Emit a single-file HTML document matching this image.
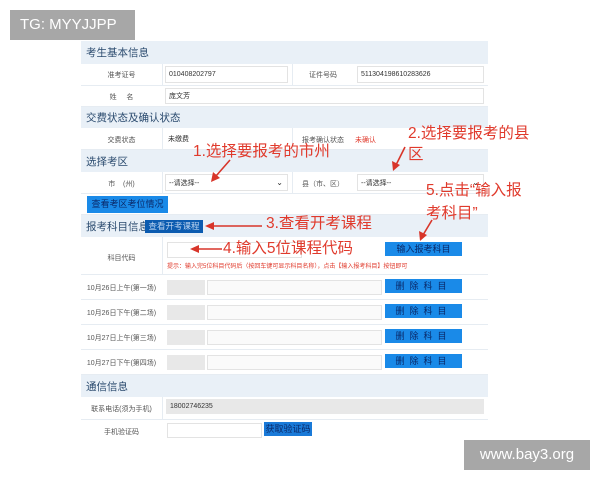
<!DOCTYPE html>
<html><head><meta charset="utf-8"><style>
*{margin:0;padding:0;box-sizing:border-box}
body{width:600px;height:480px;background:#fff;position:relative;overflow:hidden;font-family:"Liberation Sans","Noto Sans CJK SC",sans-serif}
.a{position:absolute}
.hd{position:absolute;left:81px;width:407px;background:#e9f0f7;color:#2a4a6e;font-size:10.5px;padding-left:5px;display:flex;align-items:center}
.row{position:absolute;left:81px;width:407px;background:#fff;border-bottom:1px solid #e6ecf2}
.lab{position:absolute;font-size:7px;color:#555;text-align:center}
.inp{position:absolute;border:1px solid #e3e3e3;background:#fff;font-size:7px;color:#333;padding-left:3px;display:flex;align-items:center}
.g{background:#e8e8e8;border-color:#e8e8e8}
.btn{position:absolute;background:#1a8ae8;color:#0a2a6a;font-size:9px;text-align:center;letter-spacing:0}
.red{position:absolute;color:#e03a2c;font-size:15.5px;white-space:nowrap;line-height:1}
.vl{position:absolute;width:1px;background:#e6ecf2}
</style></head><body>
<div class="a" style="left:10px;top:10px;width:125px;height:30px;background:#a7a7a7;color:#fff;font-size:15px;line-height:30px;padding-left:10px">TG: MYYJJPP</div>
<div class="a" style="left:81px;top:41px;width:407px;height:400px;background:#f4f7fa"></div>

<div class="hd" style="top:41px;height:23px">考生基本信息</div>
<div class="row" style="top:64px;height:22px"></div>
<div class="vl" style="left:162px;top:64px;height:43px"></div>
<div class="lab" style="left:81px;top:70px;width:81px">准考证号</div>
<div class="inp" style="left:165px;top:66px;width:123px;height:17px">010408202797</div>
<div class="vl" style="left:292px;top:64px;height:22px"></div>
<div class="lab" style="left:292px;top:70px;width:62px">证件号码</div>
<div class="inp" style="left:357px;top:66px;width:127px;height:17px">511304198610283626</div>
<div class="row" style="top:86px;height:21px"></div>
<div class="lab" style="left:81px;top:92px;width:81px">姓&nbsp;&nbsp;&nbsp;&nbsp;&nbsp;名</div>
<div class="inp" style="left:165px;top:88px;width:319px;height:16px">庞文芳</div>

<div class="hd" style="top:107px;height:21px">交费状态及确认状态</div>
<div class="row" style="top:128px;height:22px"></div>
<div class="vl" style="left:162px;top:128px;height:22px"></div>
<div class="lab" style="left:81px;top:135px;width:81px">交费状态</div>
<div class="inp" style="left:165px;top:131px;width:28px;height:16px;border:none">未缴费</div>
<div class="vl" style="left:292px;top:128px;height:22px"></div>
<div class="lab" style="left:292px;top:135px;width:62px">报考确认状态</div>
<div class="lab" style="left:355px;top:135px;color:#e03a2c">未确认</div>

<div class="hd" style="top:150px;height:22px">选择考区</div>
<div class="row" style="top:172px;height:22px"></div>
<div class="vl" style="left:162px;top:172px;height:22px"></div>
<div class="lab" style="left:81px;top:179px;width:81px">市&nbsp;&nbsp;&nbsp;&nbsp;(州)</div>
<div class="inp" style="left:165px;top:174px;width:123px;height:17px">--请选择--<span style="position:absolute;right:4px;font-size:8px">⌄</span></div>
<div class="vl" style="left:292px;top:172px;height:22px"></div>
<div class="lab" style="left:292px;top:179px;width:62px">县（市、区）</div>
<div class="inp" style="left:357px;top:174px;width:127px;height:17px">--请选择--<span style="position:absolute;right:4px;font-size:8px">⌄</span></div>
<div class="row" style="top:194px;height:21px"></div>
<div class="btn" style="left:87px;top:196px;width:81px;height:17px;line-height:17px">查看考区考位情况</div>

<div class="hd" style="top:215px;height:22px">报考科目信息</div>
<div class="btn" style="left:145px;top:220px;width:58px;height:13px;line-height:13px;background:#0b5bb0;color:#bcd4f0;font-size:8.5px">查看开考课程</div>
<div class="row" style="top:237px;height:38px"></div>
<div class="vl" style="left:162px;top:237px;height:138px"></div>
<div class="lab" style="left:81px;top:253px;width:81px">科目代码</div>
<div class="inp" style="left:167px;top:242px;width:135px;height:16px"></div>
<div class="btn" style="left:385px;top:242px;width:77px;height:14px;line-height:14px">输入报考科目</div>
<div class="lab" style="left:167px;top:261px;color:#e03a2c;font-size:6px;white-space:nowrap">提示：输入完5位科目代码后（按回车键可显示科目名称），点击【输入报考科目】按钮即可</div>

<div class="row" style="top:275px;height:25px"></div>
<div class="lab" style="left:81px;top:283px;width:81px">10月26日上午(第一场)</div>
<div class="inp g" style="left:167px;top:280px;width:38px;height:15px"></div>
<div class="inp" style="left:207px;top:280px;width:175px;height:15px;background:#fafafa"></div>
<div class="btn" style="left:385px;top:279px;width:77px;height:14px;line-height:14px;letter-spacing:5px">删除科目</div>

<div class="row" style="top:300px;height:25px"></div>
<div class="lab" style="left:81px;top:308px;width:81px">10月26日下午(第二场)</div>
<div class="inp g" style="left:167px;top:305px;width:38px;height:15px"></div>
<div class="inp" style="left:207px;top:305px;width:175px;height:15px;background:#fafafa"></div>
<div class="btn" style="left:385px;top:304px;width:77px;height:14px;line-height:14px;letter-spacing:5px">删除科目</div>

<div class="row" style="top:325px;height:25px"></div>
<div class="lab" style="left:81px;top:333px;width:81px">10月27日上午(第三场)</div>
<div class="inp g" style="left:167px;top:330px;width:38px;height:15px"></div>
<div class="inp" style="left:207px;top:330px;width:175px;height:15px;background:#fafafa"></div>
<div class="btn" style="left:385px;top:329px;width:77px;height:14px;line-height:14px;letter-spacing:5px">删除科目</div>

<div class="row" style="top:350px;height:25px"></div>
<div class="lab" style="left:81px;top:358px;width:81px">10月27日下午(第四场)</div>
<div class="inp g" style="left:167px;top:355px;width:38px;height:15px"></div>
<div class="inp" style="left:207px;top:355px;width:175px;height:15px;background:#fafafa"></div>
<div class="btn" style="left:385px;top:354px;width:77px;height:14px;line-height:14px;letter-spacing:5px">删除科目</div>

<div class="hd" style="top:375px;height:22px">通信信息</div>
<div class="row" style="top:397px;height:23px"></div>
<div class="vl" style="left:162px;top:397px;height:44px"></div>
<div class="lab" style="left:81px;top:404px;width:81px">联系电话(须为手机)</div>
<div class="inp g" style="left:166px;top:399px;width:318px;height:15px">18002746235</div>
<div class="row" style="top:420px;height:21px;border:none"></div>
<div class="lab" style="left:81px;top:427px;width:81px">手机验证码</div>
<div class="inp" style="left:167px;top:423px;width:95px;height:15px"></div>
<div class="btn" style="left:264px;top:422px;width:48px;height:14px;line-height:14px;background:#1a7ad8;color:#0a2a6a">获取验证码</div>

<div class="red" style="left:193px;top:144px">1.选择要报考的市州</div>
<div class="red" style="left:408px;top:126px">2.选择要报考的县</div>
<div class="red" style="left:408px;top:147px">区</div>
<div class="red" style="left:426px;top:183px">5.点击“输入报</div>
<div class="red" style="left:426px;top:206px">考科目”</div>
<div class="red" style="left:266px;top:216px">3.查看开考课程</div>
<div class="red" style="left:223px;top:241px">4.输入5位课程代码</div>

<svg class="a" style="left:0;top:0" width="600" height="480">
<g stroke="#d8352a" stroke-width="1.6" fill="#d8352a">
<line x1="230" y1="160" x2="216" y2="176"/><polygon points="211,182 213,172 220,178" stroke="none"/>
<line x1="405" y1="147" x2="396" y2="165"/><polygon points="393,171 392,161 400,165" stroke="none"/>
<line x1="432" y1="220" x2="423" y2="235"/><polygon points="420,241 419,231 427,235" stroke="none"/>
<line x1="262" y1="226" x2="212" y2="226"/><polygon points="205,226 214,222 214,230" stroke="none"/>
<line x1="222" y1="249" x2="197" y2="249"/><polygon points="190,249 199,245 199,253" stroke="none"/>
</g></svg>

<div class="a" style="left:464px;top:440px;width:126px;height:30px;background:#a7a7a7;color:#fff;font-size:15px;line-height:30px;text-align:center">www.bay3.org</div>
</body></html>
